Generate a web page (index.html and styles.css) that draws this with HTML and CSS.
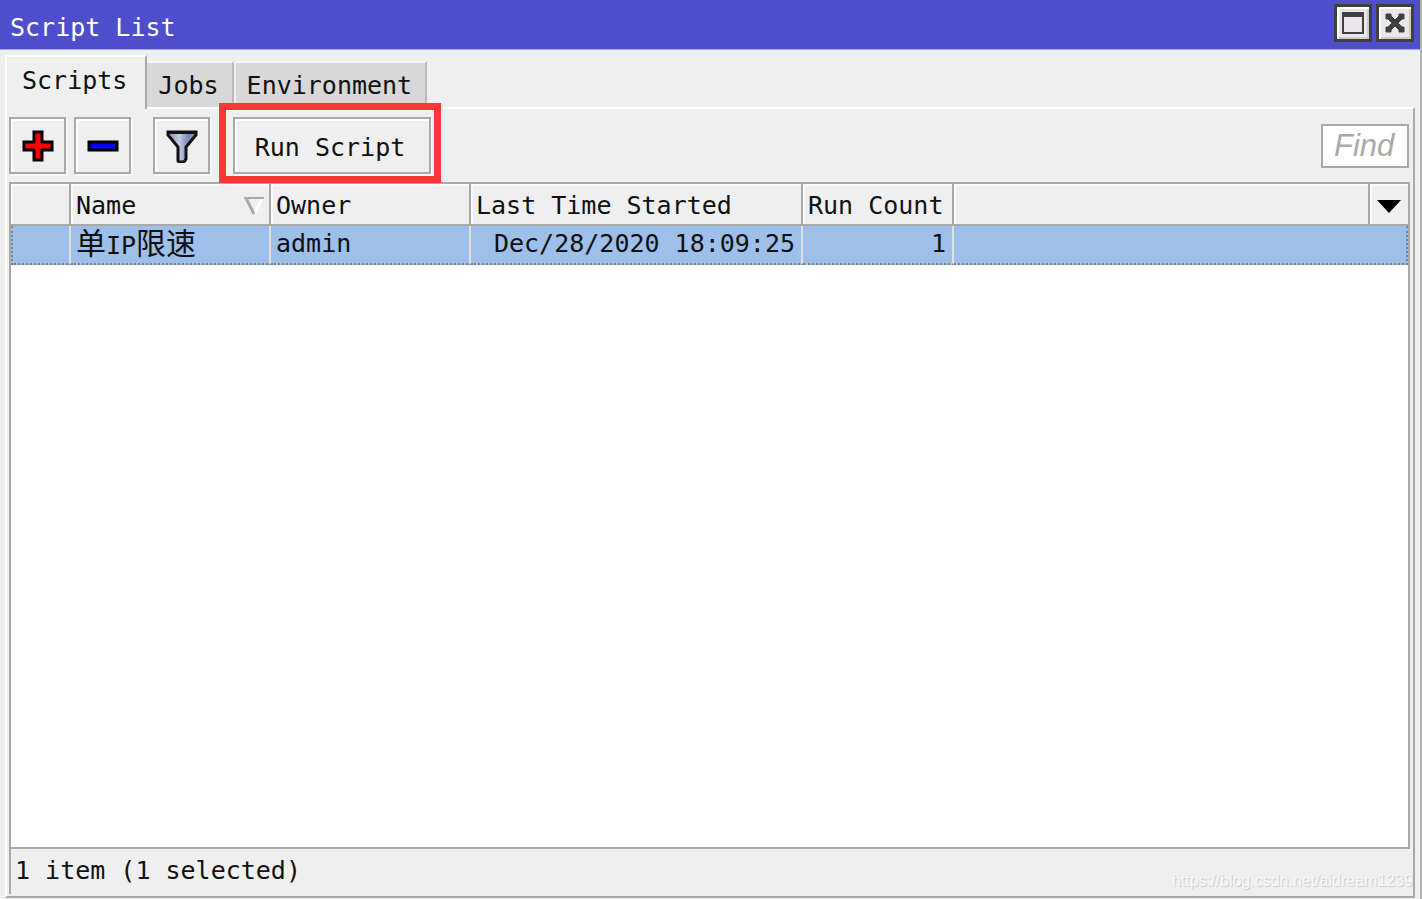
FILE: index.html
```html
<!DOCTYPE html>
<html lang="en">
<head>
    <meta charset="UTF-8">
    <meta name="viewport" content="width=device-width, initial-scale=1.0">
    <title>Script List</title>
    <link rel="stylesheet" href="styles.css">
</head>
<body>
    <div class="window">
        <header class="titlebar">
            <h1 class="title">Script List</h1>
            <button class="window-btn" aria-label="Maximize">
                <svg width="24" height="24" viewBox="0 0 24 24">
                    <path d="M2 2h20v20H2z" fill="none" stroke="#404040" stroke-width="2"/>
                    <path d="M1 1h22v5H1z" fill="#404040"/>
                </svg>
            </button>
            <button class="window-btn" aria-label="Close">
                <svg width="24" height="24" viewBox="0 0 24 24">
                    <path d="M3 3h5v2l4 4 4-4V3h5v5h-2l-4 4 4 4h2v5h-5v-2l-4-4-4 4v2H3v-5h2l4-4-4-4H3z" fill="#404040" stroke="#404040"/>
                </svg>
            </button>
        </header>

        <nav class="tabs">
            <button class="tab active">Scripts</button>
            <button class="tab">Jobs</button>
            <button class="tab">Environment</button>
        </nav>

        <main class="panel">
            <div class="toolbar">
                <button class="tool-btn" aria-label="Add">
                    <svg width="32" height="32" viewBox="0 0 32 32">
                        <path d="M12 2h8v10h10v8H20v10h-8V20H2v-8h10z" fill="#ff0000" stroke="#000" stroke-width="3"/>
                    </svg>
                </button>
                <button class="tool-btn" aria-label="Remove">
                    <svg width="32" height="32" viewBox="0 0 32 32">
                        <path d="M2 12h28v8H2z" fill="#0000ff" stroke="#000" stroke-width="3"/>
                    </svg>
                </button>
                <button class="tool-btn filter-btn" aria-label="Filter">
                    <svg width="32" height="34" viewBox="0 0 32 34">
                        <defs>
                            <linearGradient id="funnel">
                                <stop offset="0.1" stop-color="#8e9dc4"/>
                                <stop offset="0.4" stop-color="#c3cce2"/>
                                <stop offset="0.7" stop-color="#7d8fc0"/>
                            </linearGradient>
                        </defs>
                        <path d="M2 3h28v3L20 18v12l-2 3h-5l-1-1V18L2 6z" fill="url(#funnel)" stroke="#111" stroke-width="3"/>
                        <path d="M1 2h30v3H1z" fill="#111"/>
                    </svg>
                </button>
                <div class="run-wrap">
                    <button class="tool-btn run-btn">Run Script</button>
                </div>
                <input class="find" type="text" placeholder="Find" aria-label="Find">
            </div>

            <div class="list">
                <div class="list-body">
                    <table class="scripts">
                        <colgroup>
                            <col class="col-flag">
                            <col class="col-name">
                            <col class="col-name">
                            <col class="col-time">
                            <col class="col-count">
                            <col>
                            <col class="col-menu">
                        </colgroup>
                        <thead>
                            <tr>
                                <th></th>
                                <th>
                                    <div class="sorted">
                                        Name
                                        <svg width="20" height="18" viewBox="0 0 20 18">
                                            <path d="M18 2L10 17" stroke="#fff" stroke-width="3"/>
                                            <path d="M0 1h20" stroke="#a9a9a9" stroke-width="2"/>
                                            <path d="M2 1l8 16" stroke="#a9a9a9" stroke-width="3"/>
                                        </svg>
                                    </div>
                                </th>
                                <th>Owner</th>
                                <th>Last Time Started</th>
                                <th>Run Count</th>
                                <th></th>
                                <th>
                                    <button class="menu-btn" aria-label="Columns">
                                        <svg width="24" height="13" viewBox="0 0 24 13">
                                            <path d="M0 0h24L12 13z" fill="#000"/>
                                        </svg>
                                    </button>
                                </th>
                            </tr>
                        </thead>
                        <tbody>
                            <tr class="selected">
                                <td></td>
                                <td><span class="cjk" lang="zh">单</span>IP<span class="cjk" lang="zh">限速</span></td>
                                <td>admin</td>
                                <td class="num">Dec/28/2020 18:09:25</td>
                                <td class="num">1</td>
                                <td class="blank" colspan="2"></td>
                            </tr>
                        </tbody>
                    </table>
                </div>
                <footer class="status">1 item (1 selected)</footer>
            </div>
        </main>
        <div class="watermark">https://blog.csdn.net/aidream1239</div>
    </div>
</body>
</html>
```
FILE: styles.css
```css
* {
    margin: 0;
    padding: 0;
    box-sizing: border-box;
}

body {
    font-family: 'DejaVu Sans Mono', 'Noto Sans CJK SC', monospace;
    font-size: 25px;
    line-height: 30px;
    color: #111;
    background: #efefef;
}

button,
input {
    font: inherit;
    color: inherit;
}

svg {
    display: block;
}

.window {
    position: relative;
    display: flex;
    flex-direction: column;
    min-height: 100vh;
    padding-bottom: 1px;
    border-right: 2px solid #b4b4b4;
}

/* title bar */
.titlebar {
    display: flex;
    align-items: center;
    gap: 4px;
    height: 50px;
    padding: 0 6px 4px 10px;
    background: #4e4ecd;
    border-bottom: 1px solid #a5a5e2;
}

.title {
    flex: 1;
    padding-top: 10px;
    font-size: 25px;
    font-weight: normal;
    color: #fff;
}

.window-btn {
    display: flex;
    align-items: center;
    justify-content: center;
    width: 38px;
    height: 38px;
    background: #ebe6ea;
    border: 3px solid #404040;
    box-shadow: inset 2px 2px #fff, inset -2px -2px #ccc;
}

/* tabs */
.tabs {
    display: flex;
    align-items: flex-end;
    height: 57px;
    padding-left: 5px;
}

.tab {
    height: 46px;
    padding: 2px 13px 0 11px;
    background: #d8d8d8;
    border: none;
    border-top: 2px solid #f6f6f6;
    border-right: 2px solid #bbb;
}

.tab + .tab + .tab {
    margin-left: 2px;
}

.tab.active {
    position: relative;
    height: 54px;
    margin-bottom: -2px;
    padding: 0 18px 4px 15px;
    background: #efefef;
    border-left: 2px solid #fff;
    border-top-color: #fff;
    border-right-color: #a9a9a9;
}

/* panel */
.panel {
    display: flex;
    flex: 1;
    flex-direction: column;
    margin: 0 5px;
    padding: 8px 3px 2px 2px;
    border: 2px solid #fff;
    border-right-color: #a9a9a9;
    border-bottom-color: #a9a9a9;
}

.toolbar {
    display: flex;
    align-items: center;
    gap: 8px;
    margin-bottom: 8px;
    padding-right: 1px;
}

.tool-btn {
    display: flex;
    align-items: center;
    justify-content: center;
    width: 57px;
    height: 57px;
    background: #efefef;
    border: 2px solid #a9a9a9;
    box-shadow: inset 2px 2px #fff, 2px 2px #f8f8f8;
}

.filter-btn {
    margin: 0 15px 0 14px;
}

.run-wrap {
    position: relative;
}

.run-wrap::after {
    content: '';
    position: absolute;
    inset: -14px -10px -9px -14px;
    border: 7px solid #fd3637;
    pointer-events: none;
}

.run-btn {
    width: 198px;
    padding: 4px 4px 0 0;
}

.find {
    width: 88px;
    height: 44px;
    margin-left: auto;
    padding: 0 11px;
    font: italic 31px/36px 'Liberation Sans', sans-serif;
    background: #fff;
    border: 2px solid #a9a9a9;
}

.find::placeholder {
    color: #aaa;
}

/* list */
.list {
    display: flex;
    flex: 1;
    flex-direction: column;
    border-left: 2px solid #a9a9a9;
}

.list-body {
    flex: 1;
    background: #fff;
    border: 2px solid #a9a9a9;
    border-left: none;
}

.scripts {
    width: 100%;
    table-layout: fixed;
    border-collapse: separate;
    border-spacing: 0;
}

.col-flag {
    width: 60px;
}

.col-name {
    width: 200px;
}

.col-time {
    width: 332px;
}

.col-count {
    width: 151px;
}

.col-menu {
    width: 38px;
}

th {
    height: 42px;
    padding: 4px 5px 0;
    font-weight: normal;
    text-align: left;
    white-space: nowrap;
    background: #efefef;
    border-right: 2px solid #a9a9a9;
    border-bottom: 2px solid #a9a9a9;
    box-shadow: inset 2px 2px #fafafa;
}

th:last-child {
    border-right: none;
}

.sorted {
    display: flex;
    align-items: center;
    justify-content: space-between;
}

.menu-btn {
    display: flex;
    align-items: center;
    justify-content: center;
    width: 100%;
    height: 30px;
    background: none;
    border: none;
}

td {
    height: 37px;
    padding: 0 6px 2px 5px;
    line-height: 30px;
    white-space: nowrap;
    border-right: 2px solid #e0e0e0;
    border-bottom: 2px dotted #808080;
}

.selected {
    background: #9dbfea;
}

td:first-child {
    border-left: 2px dotted #808080;
}

td.blank {
    border-right: 2px dotted #808080;
}

.num {
    text-align: right;
}

.cjk {
    font-family: 'Noto Sans CJK SC', sans-serif;
    font-size: 30px;
    line-height: 30px;
}

.status {
    height: 45px;
    padding: 7px 4px;
}

.watermark {
    position: absolute;
    right: 7px;
    bottom: 8px;
    font: 16px/20px 'Liberation Sans', sans-serif;
    color: #f8f8f8;
    text-shadow: 1px 1px 1px #c8c8c8;
}
```
